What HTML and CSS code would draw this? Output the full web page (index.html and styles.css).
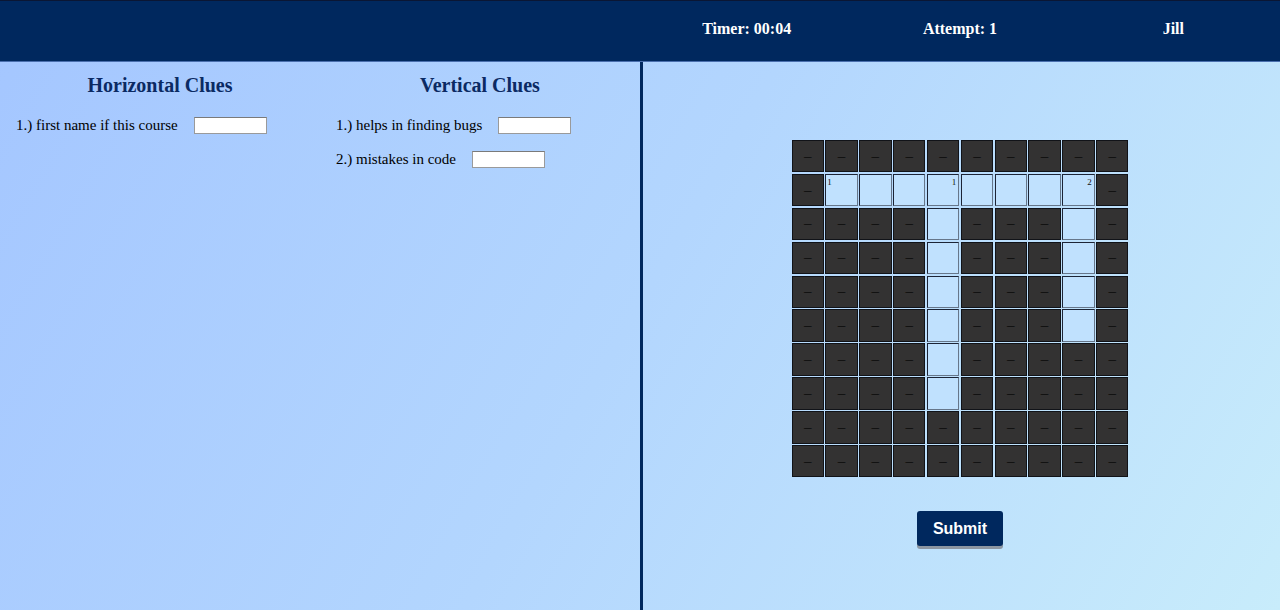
FILE: index.html
```html
<!DOCTYPE html>
<html lang="en">
<head>
<meta charset="utf-8">
<title>Crossword</title>
<link rel="stylesheet" href="styles.css">
</head>
<body>
<header class="topbar">
  <div class="topbar-left"></div>
  <div class="topbar-right">
    <div class="stat">Timer: 00:04</div>
    <div class="stat">Attempt: 1</div>
    <div class="stat">Jill</div>
  </div>
</header>
<main class="main">
  <section class="clues-panel">
    <div class="clue-col">
      <h2 class="clue-title">Horizontal Clues</h2>
      <div class="clue-list">
        <div class="clue"><span>1.) first name if this course</span><input class="clue-input" type="text"></div>
      </div>
    </div>
    <div class="clue-col">
      <h2 class="clue-title">Vertical Clues</h2>
      <div class="clue-list">
        <div class="clue"><span>1.) helps in finding bugs</span><input class="clue-input" type="text"></div>
        <div class="clue"><span>2.) mistakes in code</span><input class="clue-input" type="text"></div>
      </div>
    </div>
  </section>
  <section class="board-panel">
    <div class="grid" id="grid"></div>
    <button class="submit" type="button">Submit</button>
  </section>
</main>
<script>
  var light = {
    "1,1":"tl1","1,2":"","1,3":"","1,4":"tr1","1,5":"","1,6":"","1,7":"","1,8":"tr2",
    "2,4":"","3,4":"","4,4":"","5,4":"","6,4":"","7,4":"",
    "2,8":"","3,8":"","4,8":"","5,8":""
  };
  var g = document.getElementById('grid');
  for (var r = 0; r < 10; r++) {
    for (var c = 0; c < 10; c++) {
      var d = document.createElement('div');
      var k = r + ',' + c;
      if (k in light) {
        d.className = 'cell open';
        var v = light[k];
        if (v) {
          var n = document.createElement('span');
          n.className = 'num ' + (v.indexOf('tl') === 0 ? 'num-left' : 'num-right');
          n.textContent = v.slice(2);
          d.appendChild(n);
        }
      } else {
        d.className = 'cell block';
        d.textContent = '\u2013';
      }
      g.appendChild(d);
    }
  }
</script>
</body>
</html>
```

FILE: styles.css
```css
html, body {
  margin: 0;
  padding: 0;
}
body {
  width: 1280px;
  height: 610px;
  overflow: hidden;
  font-family: "Liberation Serif", "Times New Roman", serif;
  background: linear-gradient(120deg, #a4c6ff 0%, #b3d6fe 50%, #c8ecfb 100%);
}
.topbar {
  height: 60px;
  display: flex;
  background: #00285e;
  border-top: 1px solid #0a1634;
  border-bottom: 1px solid #4a6fae;
}
.topbar-left {
  flex: 1;
}
.topbar-right {
  flex: 1;
  display: flex;
}
.stat {
  flex: 1;
  text-align: center;
  color: #ffffff;
  font-weight: bold;
  font-size: 16px;
  line-height: 18px;
  padding-top: 19px;
}
.main {
  display: flex;
  height: 548px;
}
.clues-panel {
  width: 640px;
  display: grid;
  grid-template-columns: 1fr 1fr;
  align-content: start;
}
.clue-col {
  padding: 12px 16px 0;
}
.clue-title {
  margin: 0;
  text-align: center;
  font-size: 20px;
  line-height: 22px;
  font-weight: bold;
  color: #0b2a63;
}
.clue-list {
  margin-top: 12px;
}
.clue {
  height: 34px;
  display: flex;
  align-items: center;
  gap: 16px;
  font-size: 15px;
  color: #000;
}
.clue-input {
  width: 73px;
  height: 17px;
  box-sizing: border-box;
  margin: 0;
  padding: 0 2px;
  border: 1px solid #9a9a9a;
  border-top-color: #7a7a7a;
  background: #ffffff;
}
.board-panel {
  flex: 1;
  border-left: 3px solid #00285e;
  display: flex;
  flex-direction: column;
  align-items: center;
  padding-top: 78px;
  padding-right: 3px;
}
.grid {
  width: 337px;
  display: grid;
  grid-template-columns: repeat(10, 1fr);
  grid-auto-rows: 32.4px;
  gap: 1.5px;
}
.cell {
  position: relative;
  box-sizing: border-box;
  border: 1px solid #111318;
  display: flex;
  align-items: center;
  justify-content: center;
}
.block {
  background: #333232;
  color: #0a0a0a;
  font-size: 15px;
  line-height: 1;
}
.open {
  background: #c0e1fe;
  border-color: #1c2436 #66768a #66768a #1c2436;
}
.num {
  position: absolute;
  top: 3px;
  font-size: 9px;
  line-height: 1;
  color: #111;
}
.num-left {
  left: 1px;
}
.num-right {
  right: 2px;
}
.submit {
  margin-top: 34px;
  width: 86px;
  height: 35px;
  border: none;
  border-radius: 3px;
  background: #00285e;
  color: #ffffff;
  font-family: "Liberation Sans", Arial, sans-serif;
  font-weight: bold;
  font-size: 16px;
  box-shadow: 0 3px 0 #8c96a2;
  padding: 0;
}
```
